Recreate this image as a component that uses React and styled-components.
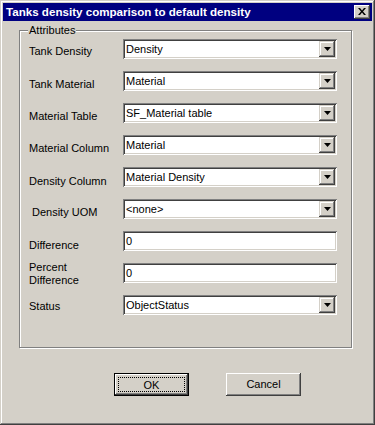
import React from "react";
import styled, { createGlobalStyle } from "styled-components";

const GlobalStyle = createGlobalStyle`
  html, body {
    margin: 0;
    padding: 0;
    background: #d4d0c8;
  }
  body {
    font-family: "Liberation Sans", Arial, sans-serif;
    font-size: 11px;
    color: #000;
  }
`;

const rows = [
  { label: "Tank Density", value: "Density", kind: "select", offset: 6 },
  { label: "Tank Material", value: "Material", kind: "select", offset: 7 },
  { label: "Material Table", value: "SF_Material table", kind: "select", offset: 7 },
  { label: "Material Column", value: "Material", kind: "select", offset: 7 },
  { label: "Density Column", value: "Material Density", kind: "select", offset: 8 },
  { label: "Density UOM", value: "<none>", kind: "select", offset: 7, indent: 3 },
  { label: "Difference", value: "0", kind: "text", offset: 8 },
  { label: ["Percent", "Difference"], value: "0", kind: "text", offset: -2 },
  { label: "Status", value: "ObjectStatus", kind: "select", offset: 5 },
];

const CloseGlyph = () => (
  <svg width="8" height="7" viewBox="0 0 8 7">
    <path d="M0 0h2l2 2.5L6 0h2L5 3.5L8 7H6L4 4.5L2 7H0l3-3.5z" fill="#000" />
  </svg>
);

const ArrowGlyph = () => (
  <svg width="7" height="4" viewBox="0 0 7 4">
    <path d="M0 0h7L3.5 4z" fill="#000" />
  </svg>
);

const Combo = ({ value }) => (
  <Field>
    <FieldText>{value}</FieldText>
    <DropButton>
      <ArrowGlyph />
    </DropButton>
  </Field>
);

const TextBox = ({ value }) => (
  <Field>
    <FieldText>{value}</FieldText>
  </Field>
);

export default function App() {
  return (
    <>
      <GlobalStyle />
      <Window>
        <TitleBar>
          <TitleText>Tanks density comparison to default density</TitleText>
          <CloseButton>
            <CloseGlyph />
          </CloseButton>
        </TitleBar>
        <Body>
          <GroupBox>
            <GroupLabel>Attributes</GroupLabel>
            <FormGrid>
              {rows.map((row, i) => (
                <React.Fragment key={i}>
                  <Label $offset={row.offset} $indent={row.indent || 0}>
                    {Array.isArray(row.label)
                      ? row.label.map((line) => <div key={line}>{line}</div>)
                      : row.label}
                  </Label>
                  {row.kind === "select" ? (
                    <Combo value={row.value} />
                  ) : (
                    <TextBox value={row.value} />
                  )}
                </React.Fragment>
              ))}
            </FormGrid>
          </GroupBox>
          <ButtonRow>
            <PushButton $default>
              <FocusRing>OK</FocusRing>
            </PushButton>
            <PushButton>Cancel</PushButton>
          </ButtonRow>
        </Body>
      </Window>
    </>
  );
}

const Window = styled.div`
  width: 375px;
  height: 425px;
  box-sizing: border-box;
  padding: 3px;
  background: #d4d0c8;
  box-shadow: inset -1px -1px #404040, inset 1px 1px #d4d0c8,
    inset -2px -2px #808080, inset 2px 2px #fff;
  display: flex;
  flex-direction: column;
`;

const TitleBar = styled.div`
  height: 18px;
  background: #000080;
  display: flex;
  align-items: center;
  justify-content: space-between;
  padding: 0 2px 0 3px;
`;

const TitleText = styled.span`
  color: #fff;
  font-weight: bold;
  font-size: 11.6px;
  line-height: 14px;
  white-space: nowrap;
`;

const CloseButton = styled.div`
  width: 16px;
  height: 14px;
  box-sizing: border-box;
  background: #d4d0c8;
  box-shadow: inset -1px -1px #404040, inset 1px 1px #fff,
    inset -2px -2px #808080, inset 2px 2px #d4d0c8;
  display: flex;
  align-items: center;
  justify-content: center;
  padding: 0 1px 1px 0;
`;

const Body = styled.div`
  flex: 1;
  display: flex;
  flex-direction: column;
  padding: 9px 0 0 16px;
`;

const GroupBox = styled.div`
  position: relative;
  width: 333px;
  height: 318px;
  box-sizing: border-box;
  border: 1px solid #808080;
  box-shadow: 1px 1px 0 #fff, inset 1px 1px 0 #fff;
  padding: 8px 0 0 9px;
`;

const GroupLabel = styled.span`
  position: absolute;
  left: 8px;
  top: -7px;
  padding: 0 1px;
  line-height: 13px;
  background: #d4d0c8;
`;

const FormGrid = styled.div`
  display: grid;
  grid-template-columns: 94px 214px;
  grid-auto-rows: 20px;
  row-gap: 12px;
`;

const Label = styled.div`
  line-height: 13px;
  margin-top: ${(p) => p.$offset}px;
  padding-left: ${(p) => p.$indent}px;
  white-space: nowrap;
`;

const Field = styled.div`
  height: 20px;
  box-sizing: border-box;
  padding: 2px;
  background: #fff;
  box-shadow: inset 1px 1px #808080, inset -1px -1px #fff,
    inset 2px 2px #404040, inset -2px -2px #d4d0c8;
  display: flex;
  align-items: center;
`;

const FieldText = styled.span`
  flex: 1;
  padding-left: 1px;
  line-height: 16px;
  white-space: nowrap;
  overflow: hidden;
`;

const DropButton = styled.div`
  width: 16px;
  height: 16px;
  box-sizing: border-box;
  background: #d4d0c8;
  box-shadow: inset -1px -1px #404040, inset 1px 1px #d4d0c8,
    inset -2px -2px #808080, inset 2px 2px #fff;
  display: flex;
  align-items: center;
  justify-content: center;
  padding-bottom: 1px;
`;

const ButtonRow = styled.div`
  display: flex;
  gap: 37px;
  margin-top: 25px;
  padding-left: 95px;
`;

const PushButton = styled.div`
  width: 75px;
  height: 23px;
  box-sizing: border-box;
  background: #d4d0c8;
  display: flex;
  align-items: center;
  justify-content: center;
  padding: ${(p) => (p.$default ? "3px" : "0 0 1px 0")};
  border: ${(p) => (p.$default ? "1px solid #000" : "none")};
  box-shadow: inset -1px -1px #404040, inset 1px 1px #fff,
    inset -2px -2px #808080, inset 2px 2px #d4d0c8;
`;

const FocusRing = styled.div`
  flex: 1;
  align-self: stretch;
  border: 1px dotted #000;
  display: flex;
  align-items: center;
  justify-content: center;
`;
